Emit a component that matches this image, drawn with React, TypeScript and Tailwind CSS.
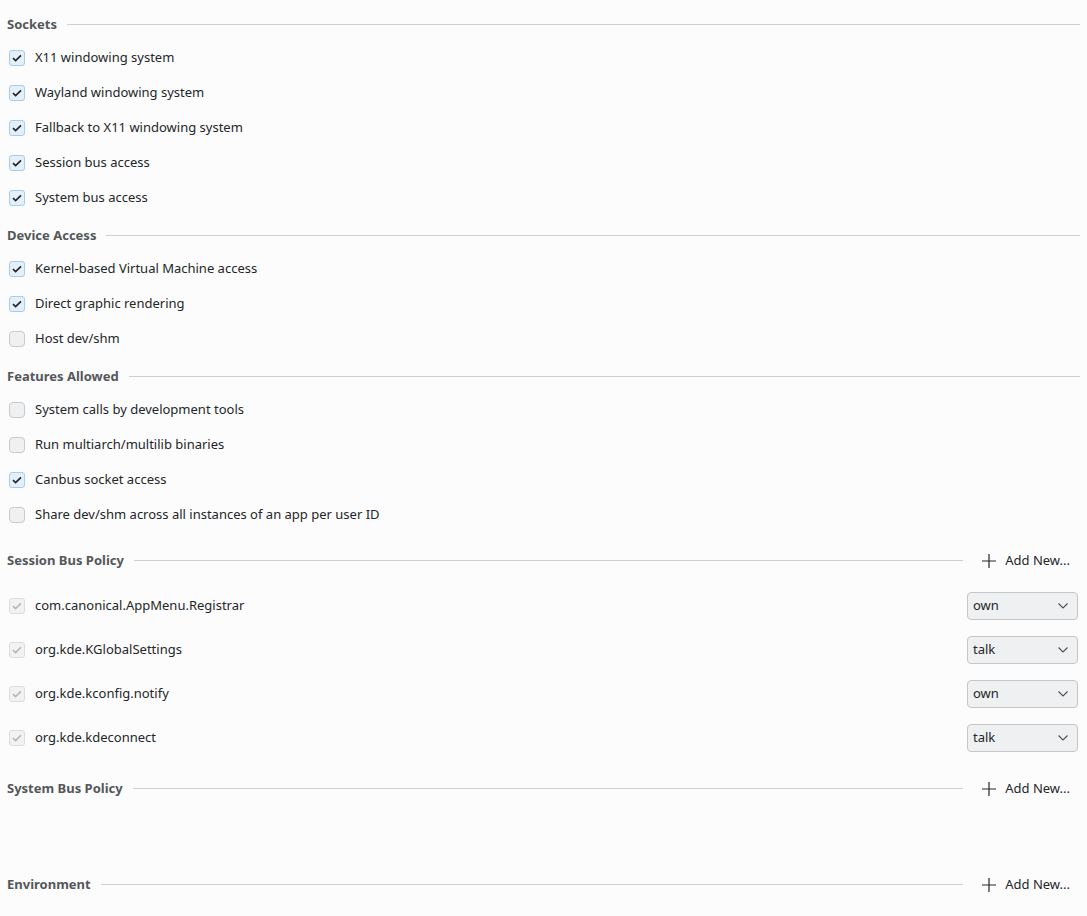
import React from "react";

type Item = { label: string; checked: boolean };

const sockets: Item[] = [
  { label: "X11 windowing system", checked: true },
  { label: "Wayland windowing system", checked: true },
  { label: "Fallback to X11 windowing system", checked: true },
  { label: "Session bus access", checked: true },
  { label: "System bus access", checked: true },
];

const devices: Item[] = [
  { label: "Kernel-based Virtual Machine access", checked: true },
  { label: "Direct graphic rendering", checked: true },
  { label: "Host dev/shm", checked: false },
];

const features: Item[] = [
  { label: "System calls by development tools", checked: false },
  { label: "Run multiarch/multilib binaries", checked: false },
  { label: "Canbus socket access", checked: true },
  { label: "Share dev/shm across all instances of an app per user ID", checked: false },
];

const sessionBus = [
  { name: "com.canonical.AppMenu.Registrar", policy: "own" },
  { name: "org.kde.KGlobalSettings", policy: "talk" },
  { name: "org.kde.kconfig.notify", policy: "own" },
  { name: "org.kde.kdeconnect", policy: "talk" },
];

function Check({ checked, disabled }: { checked: boolean; disabled?: boolean }) {
  if (disabled) {
    return (
      <span className="flex h-4 w-4 items-center justify-center rounded-[3px] border border-[#dcdddf] bg-[#f2f2f3]">
        <svg width="10" height="8" viewBox="0 0 10 8" fill="none">
          <path d="M1 4.2 3.6 6.6 9 1.3" stroke="#b4b6b8" strokeWidth="1.6" />
        </svg>
      </span>
    );
  }
  if (!checked) {
    return <span className="h-4 w-4 rounded-[4px] border border-[#c8cacc] bg-[#eef0f1]" />;
  }
  return (
    <span className="flex h-4 w-4 items-center justify-center rounded-[3px] border border-[#a6cdf0] bg-[#e3eff9]">
      <svg width="10" height="8" viewBox="0 0 10 8" fill="none">
        <path d="M1 4.2 3.6 6.6 9 1.3" stroke="#232629" strokeWidth="1.7" />
      </svg>
    </span>
  );
}

function Header({ title, action }: { title: string; action?: boolean }) {
  return (
    <div className={`flex items-center ${action ? "h-[48px]" : "h-[32px]"}`}>
      <span className="pt-[2px] text-[13px] font-bold text-[#54575a]">{title}</span>
      <div className="ml-[10px] h-px flex-1 bg-[#cfd0d2]" />
      {action && (
        <button className="ml-[13px] flex h-[30px] items-center gap-[8px] pl-[5px] pr-[10px] pt-[2px] text-[13px] text-[#232629]">
          <svg width="16" height="16" viewBox="0 0 16 16" fill="none">
            <path d="M8 1v14M1 8h14" stroke="#232629" strokeWidth="1.2" />
          </svg>
          Add New...
        </button>
      )}
    </div>
  );
}

function CheckRow({ item }: { item: Item }) {
  return (
    <div className="flex h-[35px] items-center gap-[10px] pl-[2px]">
      <Check checked={item.checked} />
      <span className="text-[13px] text-[#232629]">{item.label}</span>
    </div>
  );
}

function Select({ value }: { value: string }) {
  return (
    <div className="mr-[2px] flex h-[28px] w-[111px] items-center justify-between rounded-[4px] border border-[#c3c5c7] bg-[#eff0f1] pl-[5px] pr-[8px] text-[13px] text-[#232629]">
      <span>{value}</span>
      <svg width="12" height="8" viewBox="0 0 12 8" fill="none">
        <path d="M1.5 1.5 6 6l4.5-4.5" stroke="#4d4f52" strokeWidth="1.1" />
      </svg>
    </div>
  );
}

export default function App() {
  return (
    <div
      className="min-h-[916px] bg-[#fcfcfc] px-[7px] pt-[8px]"
      style={{ fontFamily: '"Noto Sans", "Open Sans", sans-serif' }}
    >
      <div className="flex flex-col gap-[4px]">
        <section>
          <Header title="Sockets" />
          {sockets.map((s) => (
            <CheckRow key={s.label} item={s} />
          ))}
        </section>
        <section>
          <Header title="Device Access" />
          {devices.map((s) => (
            <CheckRow key={s.label} item={s} />
          ))}
        </section>
        <section>
          <Header title="Features Allowed" />
          {features.map((s) => (
            <CheckRow key={s.label} item={s} />
          ))}
        </section>
        <section>
          <Header title="Session Bus Policy" action />
          {sessionBus.map((b) => (
            <div key={b.name} className="flex h-[44px] items-center justify-between pl-[2px]">
              <div className="flex items-center gap-[10px]">
                <Check checked disabled />
                <span className="text-[13px] text-[#232629]">{b.name}</span>
              </div>
              <Select value={b.policy} />
            </div>
          ))}
        </section>
        <section>
          <Header title="System Bus Policy" action />
          <div className="h-[44px]" />
        </section>
        <section>
          <Header title="Environment" action />
        </section>
      </div>
    </div>
  );
}
